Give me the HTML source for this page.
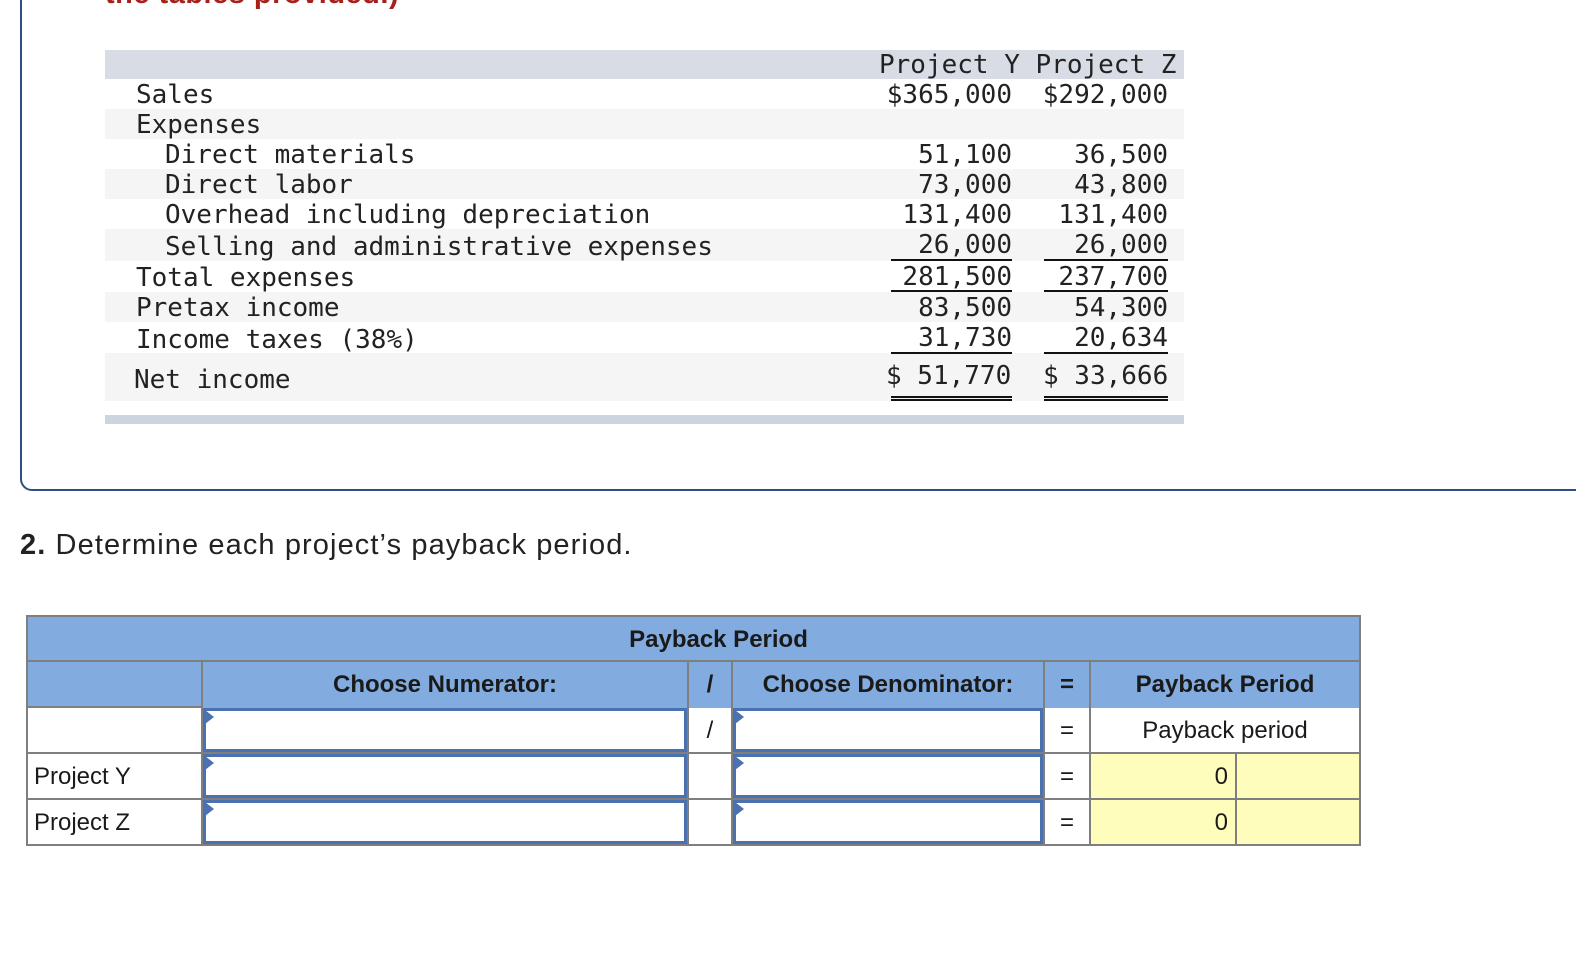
<!DOCTYPE html>
<html><head><meta charset="utf-8"><style>
*{margin:0;padding:0;box-sizing:border-box}
body{width:1576px;height:970px;background:#fff;position:relative;overflow:hidden;font-family:"Liberation Sans",sans-serif;color:#222}
.a{position:absolute}
.m{font-family:"DejaVu Sans Mono","Liberation Mono",monospace;font-size:26px;color:#222;white-space:pre;line-height:30px}
.r{text-align:right}
.hd{background:#82abdf;font-weight:bold;font-size:24px;text-align:center;color:#1a1a1a}
.inp{position:absolute;border:3px solid #4a72b0;background:#fff}
.inp:before{content:"";position:absolute;left:-1px;top:-1px;border-left:9px solid #4a72b0;border-top:7px solid transparent;border-bottom:7px solid transparent}
.t{font-size:24px;position:absolute;color:#1a1a1a}
</style></head><body>
<div class="a" style="left:105px;top:-22px;font-size:29px;font-weight:bold;color:#a6201c;letter-spacing:0.5px">the tables provided.)</div>
<div class="a" style="left:20px;top:-20px;width:1600px;height:511px;border:2px solid #2d4f85;border-radius:12px"></div>

<div class="a" style="left:105px;top:50px;width:1079px;height:29px;background:#d7dce5"></div>
<div class="a" style="left:105px;top:109px;width:1079px;height:30px;background:#f5f5f5"></div>
<div class="a" style="left:105px;top:169px;width:1079px;height:30px;background:#f5f5f5"></div>
<div class="a" style="left:105px;top:229px;width:1079px;height:32px;background:#f5f5f5"></div>
<div class="a" style="left:105px;top:292px;width:1079px;height:30px;background:#f5f5f5"></div>
<div class="a" style="left:105px;top:353px;width:1079px;height:48px;background:#f5f5f5"></div>
<div class="a" style="left:105px;top:415px;width:1079px;height:9px;background:#cdd4e0"></div>

<div class="a m" style="left:879px;top:50px">Project Y Project Z</div>
<div class="a m" style="left:136px;top:80px">Sales</div>
<div class="a m" style="left:136px;top:110px">Expenses</div>
<div class="a m" style="left:165px;top:140px">Direct materials</div>
<div class="a m" style="left:165px;top:170px">Direct labor</div>
<div class="a m" style="left:165px;top:200px">Overhead including depreciation</div>
<div class="a m" style="left:165px;top:232px">Selling and administrative expenses</div>
<div class="a m" style="left:136px;top:263px">Total expenses</div>
<div class="a m" style="left:136px;top:293px">Pretax income</div>
<div class="a m" style="left:136px;top:325px">Income taxes (38%)</div>
<div class="a m" style="left:134px;top:365px">Net income</div>

<div class="a m r" style="left:860px;width:152px;top:80px">$365,000</div>
<div class="a m r" style="left:1016px;width:152px;top:80px">$292,000</div>
<div class="a m r" style="left:860px;width:152px;top:140px">51,100</div>
<div class="a m r" style="left:1016px;width:152px;top:140px">36,500</div>
<div class="a m r" style="left:860px;width:152px;top:170px">73,000</div>
<div class="a m r" style="left:1016px;width:152px;top:170px">43,800</div>
<div class="a m r" style="left:860px;width:152px;top:200px">131,400</div>
<div class="a m r" style="left:1016px;width:152px;top:200px">131,400</div>
<div class="a m r" style="left:860px;width:152px;top:230px">26,000</div>
<div class="a m r" style="left:1016px;width:152px;top:230px">26,000</div>
<div class="a m r" style="left:860px;width:152px;top:262px">281,500</div>
<div class="a m r" style="left:1016px;width:152px;top:262px">237,700</div>
<div class="a m r" style="left:860px;width:152px;top:293px">83,500</div>
<div class="a m r" style="left:1016px;width:152px;top:293px">54,300</div>
<div class="a m r" style="left:860px;width:152px;top:323px">31,730</div>
<div class="a m r" style="left:1016px;width:152px;top:323px">20,634</div>
<div class="a m" style="left:886px;top:361px">$ 51,770</div>
<div class="a m" style="left:1043px;top:361px">$ 33,666</div>
<div class="a" style="left:891px;top:259px;width:121px;height:2px;background:#111"></div>
<div class="a" style="left:1044px;top:259px;width:124px;height:2px;background:#111"></div>
<div class="a" style="left:891px;top:290px;width:121px;height:2px;background:#111"></div>
<div class="a" style="left:1044px;top:290px;width:124px;height:2px;background:#111"></div>
<div class="a" style="left:891px;top:352px;width:121px;height:2px;background:#111"></div>
<div class="a" style="left:1044px;top:352px;width:124px;height:2px;background:#111"></div>
<div class="a" style="left:891px;top:396px;width:121px;height:5px;border-top:2px solid #111;border-bottom:2px solid #111"></div>
<div class="a" style="left:1044px;top:396px;width:124px;height:5px;border-top:2px solid #111;border-bottom:2px solid #111"></div>

<div class="a" style="left:20px;top:529px;font-size:29px;letter-spacing:1.1px;color:#222;white-space:nowrap"><b>2.</b> Determine each project’s payback period.</div>

<div class="a" style="left:26px;top:615px;width:1335px;height:231px;border:2px solid #7f7f7f;background:#fff"></div>
<div class="a hd" style="left:28px;top:617px;width:1331px;height:44px;line-height:46px"><span style="position:relative;left:25px">Payback Period</span></div>
<div class="a" style="left:28px;top:661px;width:1331px;height:46px;background:#82abdf"></div>
<div class="a" style="left:26px;top:660px;width:1335px;height:2px;background:#7f7f7f"></div>
<div class="a" style="left:26px;top:706px;width:1335px;height:2px;background:#7f7f7f"></div>
<div class="a" style="left:26px;top:752px;width:1335px;height:2px;background:#7f7f7f"></div>
<div class="a" style="left:26px;top:798px;width:1335px;height:2px;background:#7f7f7f"></div>
<div class="a" style="left:1091px;top:754px;width:268px;height:44px;background:#fffdbb"></div>
<div class="a" style="left:1091px;top:800px;width:268px;height:44px;background:#fffdbb"></div>
<div class="a" style="left:201px;top:661px;width:2px;height:185px;background:#7f7f7f"></div>
<div class="a" style="left:687px;top:661px;width:2px;height:185px;background:#7f7f7f"></div>
<div class="a" style="left:731px;top:661px;width:2px;height:185px;background:#7f7f7f"></div>
<div class="a" style="left:1043px;top:661px;width:2px;height:185px;background:#7f7f7f"></div>
<div class="a" style="left:1089px;top:661px;width:2px;height:185px;background:#7f7f7f"></div>
<div class="a" style="left:1235px;top:753px;width:2px;height:93px;background:#7f7f7f"></div>

<div class="a hd" style="left:203px;top:662px;width:484px;line-height:46px">Choose Numerator:</div>
<div class="a hd" style="left:689px;top:662px;width:42px;line-height:46px">/</div>
<div class="a hd" style="left:733px;top:662px;width:310px;line-height:46px">Choose Denominator:</div>
<div class="a hd" style="left:1045px;top:662px;width:44px;line-height:46px">=</div>
<div class="a hd" style="left:1091px;top:662px;width:268px;line-height:46px">Payback Period</div>

<div class="inp" style="left:203px;top:708px;width:484px;height:44px"></div>
<div class="inp" style="left:733px;top:708px;width:310px;height:44px"></div>
<div class="inp" style="left:203px;top:754px;width:484px;height:44px"></div>
<div class="inp" style="left:733px;top:754px;width:310px;height:44px"></div>
<div class="inp" style="left:203px;top:800px;width:484px;height:44px"></div>
<div class="inp" style="left:733px;top:800px;width:310px;height:44px"></div>

<div class="t" style="left:689px;width:42px;text-align:center;top:717px">/</div>
<div class="t" style="left:1045px;width:44px;text-align:center;top:717px">=</div>
<div class="t" style="left:1045px;width:44px;text-align:center;top:763px">=</div>
<div class="t" style="left:1045px;width:44px;text-align:center;top:809px">=</div>
<div class="t" style="left:1091px;width:268px;text-align:center;top:717px">Payback period</div>
<div class="t" style="left:1091px;width:137px;text-align:right;top:763px">0</div>
<div class="t" style="left:1091px;width:137px;text-align:right;top:809px">0</div>
<div class="t" style="left:34px;top:763px">Project Y</div>
<div class="t" style="left:34px;top:809px">Project Z</div>
</body></html>
